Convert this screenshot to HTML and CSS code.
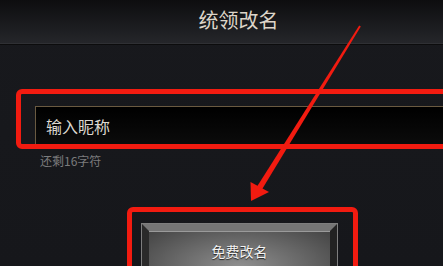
FILE: index.html
```html
<!DOCTYPE html>
<html lang="zh">
<head>
<meta charset="utf-8">
<link rel="stylesheet" href="styles.css">
</head>
<body>
<div class="screen">
  <header class="header"><h1 class="title">统领改名</h1></header>
  <main class="content">
    <div class="input-box"><span class="input-text">输入昵称</span></div>
    <div class="hint">还剩16字符</div>
    <div class="btn"><div class="btn-face">免费改名</div></div>
  </main>
  <div class="mark mark-input"></div>
  <div class="mark mark-btn"></div>
  <svg class="arrow" width="443" height="266" viewBox="0 0 443 266">
    <polygon points="359.2,25.5 360.8,26.5 261,191 255.8,188.5" fill="#f21b10"/>
    <polygon points="251,201 250.5,182 269,192" fill="#f21b10"/>
  </svg>
</div>
</body>
</html>
```
FILE: styles.css
```css
html, body {
  margin: 0;
  padding: 0;
  background: #17181c;
}
.screen {
  position: relative;
  width: 443px;
  height: 266px;
  overflow: hidden;
  background: linear-gradient(#18191d, #16171b);
  font-family: "Noto Sans CJK SC", "Noto Sans", sans-serif;
}
.header {
  height: 43px;
  display: flex;
  justify-content: center;
  align-items: center;
  background: linear-gradient(#0d0d0f, #1b1c1f 60%, #25262a);
  border-bottom: 1px solid #2f3034;
  box-shadow: 0 1px 0 #0c0c0d;
}
.title {
  margin: 0 0 4px 34px;
  font-size: 20px;
  font-weight: 400;
  color: #ddd5c9;
}
.content {
  display: flex;
  flex-direction: column;
  padding-top: 62px;
}
.input-box {
  margin-left: 35px;
  width: 405px;
  height: 40px;
  border: 1px solid #6a5a41;
  background: linear-gradient(#000, #0c0c0c);
  display: flex;
  align-items: center;
  padding-left: 10px;
  box-sizing: content-box;
}
.input-text {
  font-size: 16px;
  color: #dcd8d0;
  margin-top: -2px;
}
.hint {
  margin: 5px 0 0 40px;
  font-size: 12px;
  line-height: 16px;
  color: #7b7b7d;
}
.btn {
  margin: 55px 0 0 142px;
  width: 181px;
  height: 60px;
  border-style: solid;
  border-width: 7px 7px 0 7px;
  border-color: #767676 #222 #222 #2a2a2a;
  box-shadow: 0 0 0 1px #7e7e7e;
}
.btn-face {
  height: 100%;
  box-sizing: border-box;
  padding-top: 9px;
  text-align: center;
  font-size: 14px;
  color: #f2f2f2;
  text-shadow: 0 1px 1px #222;
  background: radial-gradient(ellipse 75% 100% at 50% 60%, #909090 0%, #6a6a6a 45%, #3c3c3c 100%);
  border-top: 1px solid #9a9a9a;
}
.mark {
  position: absolute;
  border: 5px solid #f21b10;
  border-radius: 6px;
  box-sizing: border-box;
}
.mark-input {
  left: 16px;
  top: 89px;
  width: 440px;
  height: 60px;
}
.mark-btn {
  left: 127px;
  top: 207px;
  width: 231px;
  height: 80px;
}
.arrow {
  position: absolute;
  left: 0;
  top: 0;
}
```
